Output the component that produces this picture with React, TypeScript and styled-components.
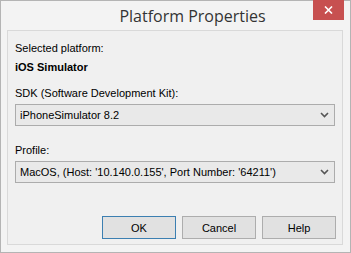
import React from 'react';
import styled, { createGlobalStyle } from 'styled-components';

const GlobalStyle = createGlobalStyle`
  html, body {
    margin: 0;
    padding: 0;
    background: #ffffff;
  }
  body {
    font-family: "Liberation Sans", Arial, sans-serif;
  }
`;

const Window = styled.div`
  width: 351px;
  height: 253px;
  box-sizing: border-box;
  background: #f3f3f3;
  border: 1px solid #b4b4b4;
  display: flex;
  flex-direction: column;
`;

const TitleBar = styled.div`
  position: relative;
  height: 29px;
  padding-left: 34px;
  display: flex;
  align-items: center;
  justify-content: center;
`;

const Title = styled.span`
  font-family: "Open Sans", "Liberation Sans", sans-serif;
  font-size: 16px;
  color: #333333;
  margin-top: 1px;
`;

const CloseButton = styled.div`
  position: absolute;
  top: -1px;
  right: 6px;
  width: 31px;
  height: 20px;
  background: #c75050;
  display: flex;
  align-items: center;
  justify-content: center;
`;

const Client = styled.div`
  flex: 1;
  margin: 0 7px 7px 6px;
  background: #f0f0f0;
  border: 1px solid #d9d9d9;
  padding: 11px 6px 0 7px;
  display: flex;
  flex-direction: column;
`;

const Label = styled.div<{ $bold?: boolean; $gap?: number }>`
  font-size: 11px;
  line-height: 13px;
  color: #000000;
  font-weight: ${(p) => (p.$bold ? 700 : 400)};
  margin-top: ${(p) => p.$gap ?? 0}px;
`;

const Select = styled.div<{ $gap?: number }>`
  height: 22px;
  box-sizing: border-box;
  margin-top: ${(p) => p.$gap ?? 0}px;
  margin-right: 1px;
  background: #e9e9e9;
  border: 1px solid #acacac;
  display: flex;
  align-items: center;
  justify-content: space-between;
  padding: 0 5px 0 4px;
  font-size: 11px;
  color: #000000;
`;

const ButtonRow = styled.div`
  margin-top: auto;
  margin-bottom: 5px;
  display: flex;
  justify-content: flex-end;
  gap: 6px;
`;

const Button = styled.div<{ $default?: boolean }>`
  width: 74px;
  height: 23px;
  box-sizing: border-box;
  background: #e1e1e1;
  border: 1px solid ${(p) => (p.$default ? '#3c7fb1' : '#adadad')};
  display: flex;
  align-items: center;
  justify-content: center;
  font-size: 11px;
  color: #000000;
`;

const Chevron = () => (
  <svg width="9" height="6" viewBox="0 0 9 6">
    <path d="M1 1 L4.5 4.5 L8 1" fill="none" stroke="#555" strokeWidth="1.6" />
  </svg>
);

const CloseIcon = () => (
  <svg width="9" height="8" viewBox="0 0 9 8">
    <path d="M1 0.5 L8 7.5 M8 0.5 L1 7.5" stroke="#fff" strokeWidth="1.6" />
  </svg>
);

export default function App() {
  return (
    <>
      <GlobalStyle />
      <Window>
        <TitleBar>
          <Title>Platform Properties</Title>
          <CloseButton>
            <CloseIcon />
          </CloseButton>
        </TitleBar>
        <Client>
          <Label>Selected platform:</Label>
          <Label $bold $gap={6}>iOS Simulator</Label>
          <Label $gap={13}>SDK (Software Development Kit):</Label>
          <Select $gap={4}>
            <span>iPhoneSimulator 8.2</span>
            <Chevron />
          </Select>
          <Label $gap={18}>Profile:</Label>
          <Select $gap={4}>
            <span>MacOS, (Host: '10.140.0.155', Port Number: '64211')</span>
            <Chevron />
          </Select>
          <ButtonRow>
            <Button $default>OK</Button>
            <Button>Cancel</Button>
            <Button>Help</Button>
          </ButtonRow>
        </Client>
      </Window>
    </>
  );
}
